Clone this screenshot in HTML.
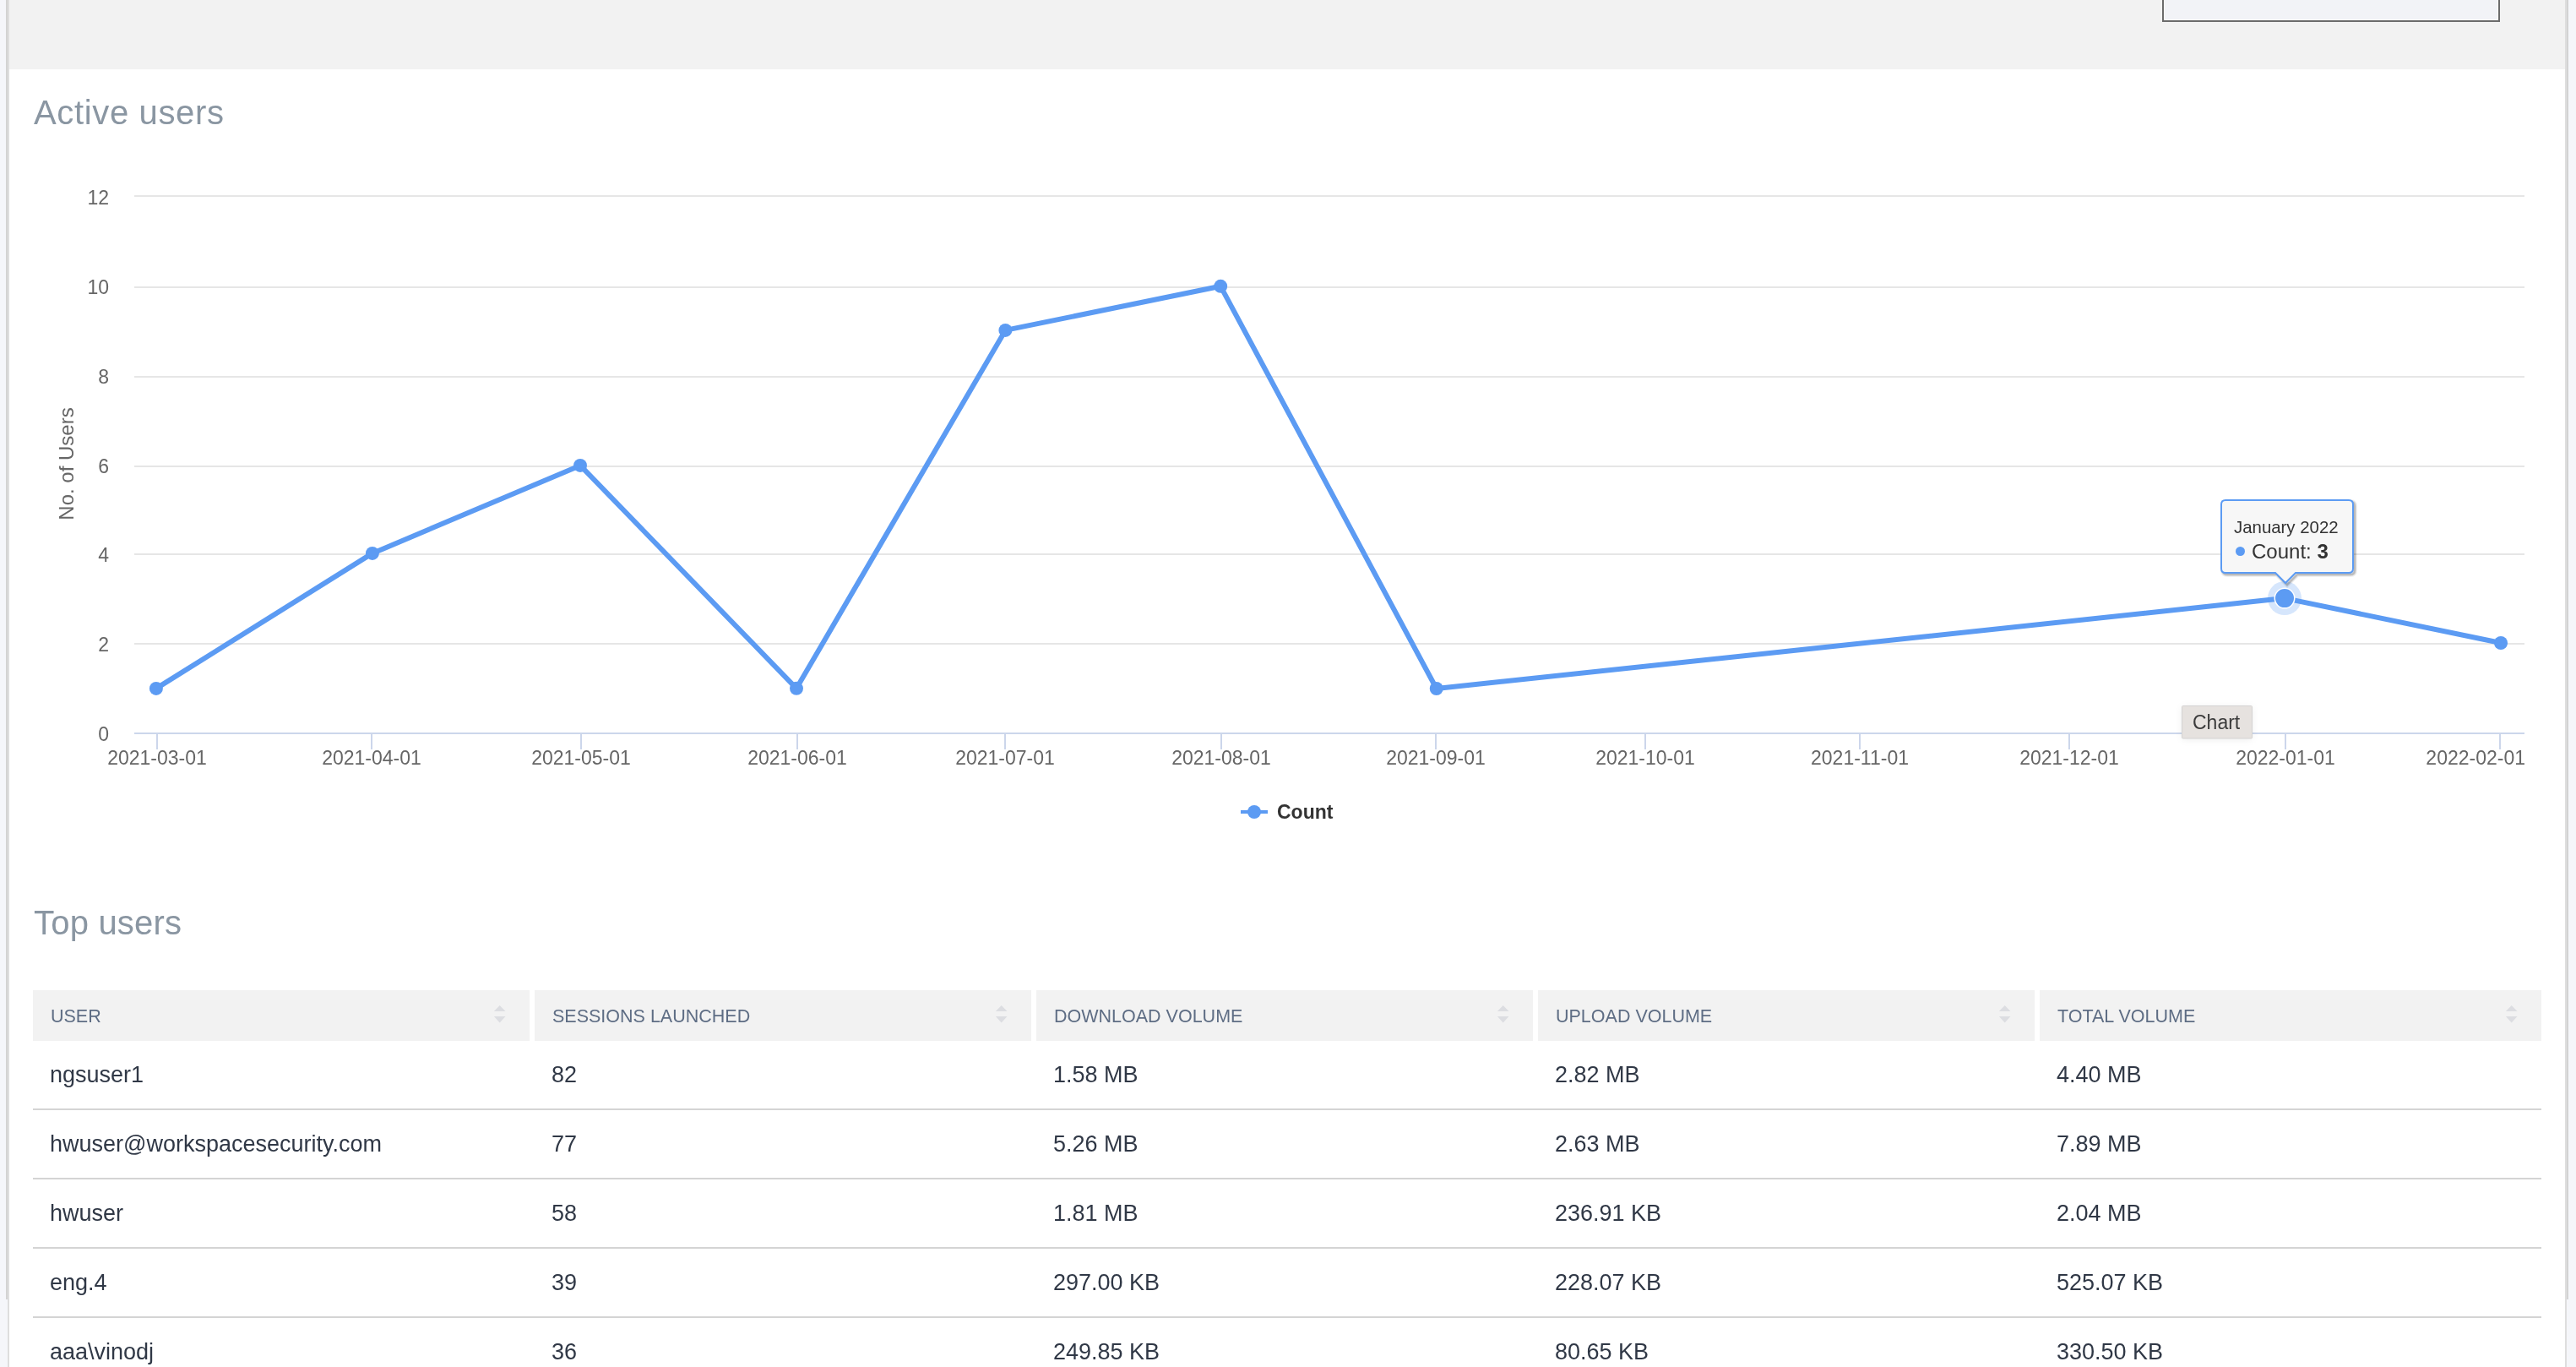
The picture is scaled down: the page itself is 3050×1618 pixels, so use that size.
<!DOCTYPE html>
<html><head><meta charset="utf-8"><title>Active users</title>
<style>
html,body{margin:0;padding:0;}
body{width:3050px;height:1618px;overflow:hidden;position:relative;background:#fff;font-family:"Liberation Sans",sans-serif;}
.abs{position:absolute;}
svg text{font-family:"Liberation Sans",sans-serif;}
svg{will-change:transform;}
.lab{font-size:23px;fill:#666;}
.ytitle{font-size:24px;fill:#666;}
.legend{font-size:23px;fill:#333;font-weight:700;}
.tiph{font-size:20.4px;fill:#333;}
.tipb{font-size:24px;fill:#333;}
.chartlbl{font-size:23px;fill:#3b3b3b;}
.title{font-size:40px;fill:#8a96a2;}
.th{font-size:21.5px;fill:#5e6d84;}
.td{font-size:27px;fill:#303846;}
</style></head>
<body>
<div class="abs" style="left:0;top:0;width:7px;height:1538px;background:#f5f6fa"></div>
<div class="abs" style="left:7px;top:0;width:2px;height:1538px;background:#d3d3d3"></div>
<div class="abs" style="left:0;top:1538px;width:9px;height:80px;background:#f5f6fa"></div>
<div class="abs" style="left:9px;top:0;width:2px;height:1618px;background:#dedede"></div>
<div class="abs" style="left:3037px;top:0;width:2px;height:1618px;background:#dedede"></div>
<div class="abs" style="left:3039px;top:0;width:2px;height:1538px;background:#d3d3d3"></div>
<div class="abs" style="left:3041px;top:0;width:9px;height:1538px;background:#f5f6fa"></div>
<div class="abs" style="left:3039px;top:1538px;width:11px;height:80px;background:#f5f6fa"></div>
<div class="abs" style="left:11px;top:0;width:3026px;height:82px;background:#f2f2f2"></div>
<div class="abs" style="left:2560px;top:-20px;width:396px;height:42px;border:2px solid #6b6b6b;background:#f2f3f7;box-shadow:inset 0 0 0 1px #fff"></div>
<svg class="abs" style="left:0;top:0" width="3050" height="1618" viewBox="0 0 3050 1618">
<defs><filter id="blur3" x="-50%" y="-50%" width="200%" height="200%"><feGaussianBlur stdDeviation="4"/></filter></defs>
<text x="40" y="147" class="title" letter-spacing="0.64">Active users</text>
<text x="40" y="1106" class="title" letter-spacing="0.2">Top users</text>
<rect x="159" y="761" width="2830" height="2" fill="#e6e6e6"/>
<rect x="159" y="655" width="2830" height="2" fill="#e6e6e6"/>
<rect x="159" y="551" width="2830" height="2" fill="#e6e6e6"/>
<rect x="159" y="445" width="2830" height="2" fill="#e6e6e6"/>
<rect x="159" y="339" width="2830" height="2" fill="#e6e6e6"/>
<rect x="159" y="231" width="2830" height="2" fill="#e6e6e6"/>
<rect x="159" y="867" width="2830" height="2" fill="#ccd6eb"/>
<rect x="185" y="867" width="2" height="20" fill="#ccd6eb"/>
<rect x="439" y="867" width="2" height="20" fill="#ccd6eb"/>
<rect x="687" y="867" width="2" height="20" fill="#ccd6eb"/>
<rect x="943" y="867" width="2" height="20" fill="#ccd6eb"/>
<rect x="1189" y="867" width="2" height="20" fill="#ccd6eb"/>
<rect x="1445" y="867" width="2" height="20" fill="#ccd6eb"/>
<rect x="1699" y="867" width="2" height="20" fill="#ccd6eb"/>
<rect x="1947" y="867" width="2" height="20" fill="#ccd6eb"/>
<rect x="2201" y="867" width="2" height="20" fill="#ccd6eb"/>
<rect x="2449" y="867" width="2" height="20" fill="#ccd6eb"/>
<rect x="2705" y="867" width="2" height="20" fill="#ccd6eb"/>
<rect x="2959" y="867" width="2" height="20" fill="#ccd6eb"/>
<text x="129" y="876.9" text-anchor="end" class="lab">0</text>
<text x="129" y="771.1" text-anchor="end" class="lab">2</text>
<text x="129" y="665.3" text-anchor="end" class="lab">4</text>
<text x="129" y="559.5" text-anchor="end" class="lab">6</text>
<text x="129" y="453.7" text-anchor="end" class="lab">8</text>
<text x="129" y="347.9" text-anchor="end" class="lab">10</text>
<text x="129" y="242.10000000000002" text-anchor="end" class="lab">12</text>
<text x="186" y="905" text-anchor="middle" class="lab">2021-03-01</text>
<text x="440" y="905" text-anchor="middle" class="lab">2021-04-01</text>
<text x="688" y="905" text-anchor="middle" class="lab">2021-05-01</text>
<text x="944" y="905" text-anchor="middle" class="lab">2021-06-01</text>
<text x="1190" y="905" text-anchor="middle" class="lab">2021-07-01</text>
<text x="1446" y="905" text-anchor="middle" class="lab">2021-08-01</text>
<text x="1700" y="905" text-anchor="middle" class="lab">2021-09-01</text>
<text x="1948" y="905" text-anchor="middle" class="lab">2021-10-01</text>
<text x="2202" y="905" text-anchor="middle" class="lab">2021-11-01</text>
<text x="2450" y="905" text-anchor="middle" class="lab">2021-12-01</text>
<text x="2706" y="905" text-anchor="middle" class="lab">2022-01-01</text>
<text x="2990" y="905" text-anchor="end" class="lab">2022-02-01</text>
<text transform="translate(86.5,549) rotate(-90)" text-anchor="middle" class="ytitle">No. of Users</text>
<polyline points="184.9,814.9 440.9,654.9 687,550.9 943,814.8 1190.4,390.9 1445.2,338.8 1700.75,815 2705,708.1 2961,761" fill="none" stroke="#5c9bf3" stroke-width="6" stroke-linejoin="round" stroke-linecap="round"/>
<circle cx="184.9" cy="814.9" r="8" fill="#5c9bf3"/>
<circle cx="440.9" cy="654.9" r="8" fill="#5c9bf3"/>
<circle cx="687" cy="550.9" r="8" fill="#5c9bf3"/>
<circle cx="943" cy="814.8" r="8" fill="#5c9bf3"/>
<circle cx="1190.4" cy="390.9" r="8" fill="#5c9bf3"/>
<circle cx="1445.2" cy="338.8" r="8" fill="#5c9bf3"/>
<circle cx="1700.75" cy="815" r="8" fill="#5c9bf3"/>
<circle cx="2961" cy="761" r="8" fill="#5c9bf3"/>
<circle cx="2705.00" cy="708.10" r="20" fill="#5c9bf3" fill-opacity="0.25"/>
<circle cx="2705.00" cy="708.10" r="11.75" fill="#5c9bf3" stroke="#fff" stroke-width="1.5"/>
<rect x="1469" y="959" width="32" height="4" fill="#5c9bf3"/>
<circle cx="1485" cy="961" r="8" fill="#5c9bf3"/>
<text x="1512" y="969" class="legend">Count</text>
<path d="M2637,594 L2783,594 Q2788,594 2788,599 L2788,675 Q2788,680 2783,680 L2720,680 L2708,692 L2696,680 L2637,680 Q2632,680 2632,675 L2632,599 Q2632,594 2637,594 Z" fill="none" stroke="#000" stroke-opacity="0.05" stroke-width="6"/>
<path d="M2637,594 L2783,594 Q2788,594 2788,599 L2788,675 Q2788,680 2783,680 L2720,680 L2708,692 L2696,680 L2637,680 Q2632,680 2632,675 L2632,599 Q2632,594 2637,594 Z" fill="none" stroke="#000" stroke-opacity="0.1" stroke-width="4"/>
<path d="M2637,594 L2783,594 Q2788,594 2788,599 L2788,675 Q2788,680 2783,680 L2720,680 L2708,692 L2696,680 L2637,680 Q2632,680 2632,675 L2632,599 Q2632,594 2637,594 Z" fill="none" stroke="#000" stroke-opacity="0.15" stroke-width="2"/>
<path d="M2635,592 L2781,592 Q2786,592 2786,597 L2786,673 Q2786,678 2781,678 L2718,678 L2706,690 L2694,678 L2635,678 Q2630,678 2630,673 L2630,597 Q2630,592 2635,592 Z" fill="#f7f7f7" stroke="#5c9bf3" stroke-width="2"/>
<text x="2645" y="631" class="tiph">January 2022</text>
<circle cx="2652.5" cy="652.5" r="5.5" fill="#5c9bf3"/>
<text x="2666" y="661" class="tipb">Count: <tspan font-weight="700">3</tspan></text>
<rect x="2584" y="837" width="82" height="38" rx="2" fill="#000" fill-opacity="0.08" filter="url(#blur3)"/>
<rect x="2583.5" y="835.5" width="83" height="38.5" rx="1" fill="#e6e2df" stroke="#d4d3d2" stroke-width="1"/>
<text x="2596" y="862.5" class="chartlbl">Chart</text>
<rect x="39" y="1172" width="588" height="60" fill="#f2f2f2"/>
<text x="60" y="1210" class="th">USER</text>
<path d="M584.9,1197 L598.5,1197 L591.7,1190 Z M584.9,1203 L598.5,1203 L591.7,1210.4 Z" fill="#dcdde1"/>
<rect x="633" y="1172" width="588" height="60" fill="#f2f2f2"/>
<text x="654" y="1210" class="th">SESSIONS LAUNCHED</text>
<path d="M1178.9,1197 L1192.5,1197 L1185.7,1190 Z M1178.9,1203 L1192.5,1203 L1185.7,1210.4 Z" fill="#dcdde1"/>
<rect x="1227" y="1172" width="588" height="60" fill="#f2f2f2"/>
<text x="1248" y="1210" class="th">DOWNLOAD VOLUME</text>
<path d="M1772.9,1197 L1786.5,1197 L1779.7,1190 Z M1772.9,1203 L1786.5,1203 L1779.7,1210.4 Z" fill="#dcdde1"/>
<rect x="1821" y="1172" width="588" height="60" fill="#f2f2f2"/>
<text x="1842" y="1210" class="th">UPLOAD VOLUME</text>
<path d="M2366.9,1197 L2380.5,1197 L2373.7,1190 Z M2366.9,1203 L2380.5,1203 L2373.7,1210.4 Z" fill="#dcdde1"/>
<rect x="2415" y="1172" width="594" height="60" fill="#f2f2f2"/>
<text x="2436" y="1210" class="th">TOTAL VOLUME</text>
<path d="M2966.9,1197 L2980.5,1197 L2973.7,1190 Z M2966.9,1203 L2980.5,1203 L2973.7,1210.4 Z" fill="#dcdde1"/>
<text x="59" y="1281" class="td">ngsuser1</text>
<text x="653" y="1281" class="td">82</text>
<text x="1247" y="1281" class="td">1.58 MB</text>
<text x="1841" y="1281" class="td">2.82 MB</text>
<text x="2435" y="1281" class="td">4.40 MB</text>
<rect x="39" y="1312" width="2970" height="2" fill="#d4d4d4"/>
<text x="59" y="1363" class="td">hwuser@workspacesecurity.com</text>
<text x="653" y="1363" class="td">77</text>
<text x="1247" y="1363" class="td">5.26 MB</text>
<text x="1841" y="1363" class="td">2.63 MB</text>
<text x="2435" y="1363" class="td">7.89 MB</text>
<rect x="39" y="1394" width="2970" height="2" fill="#d4d4d4"/>
<text x="59" y="1445" class="td">hwuser</text>
<text x="653" y="1445" class="td">58</text>
<text x="1247" y="1445" class="td">1.81 MB</text>
<text x="1841" y="1445" class="td">236.91 KB</text>
<text x="2435" y="1445" class="td">2.04 MB</text>
<rect x="39" y="1476" width="2970" height="2" fill="#d4d4d4"/>
<text x="59" y="1527" class="td">eng.4</text>
<text x="653" y="1527" class="td">39</text>
<text x="1247" y="1527" class="td">297.00 KB</text>
<text x="1841" y="1527" class="td">228.07 KB</text>
<text x="2435" y="1527" class="td">525.07 KB</text>
<rect x="39" y="1558" width="2970" height="2" fill="#d4d4d4"/>
<text x="59" y="1609" class="td">aaa\vinodj</text>
<text x="653" y="1609" class="td">36</text>
<text x="1247" y="1609" class="td">249.85 KB</text>
<text x="1841" y="1609" class="td">80.65 KB</text>
<text x="2435" y="1609" class="td">330.50 KB</text>
<rect x="39" y="1640" width="2970" height="2" fill="#d4d4d4"/>
</svg>
</body></html>
